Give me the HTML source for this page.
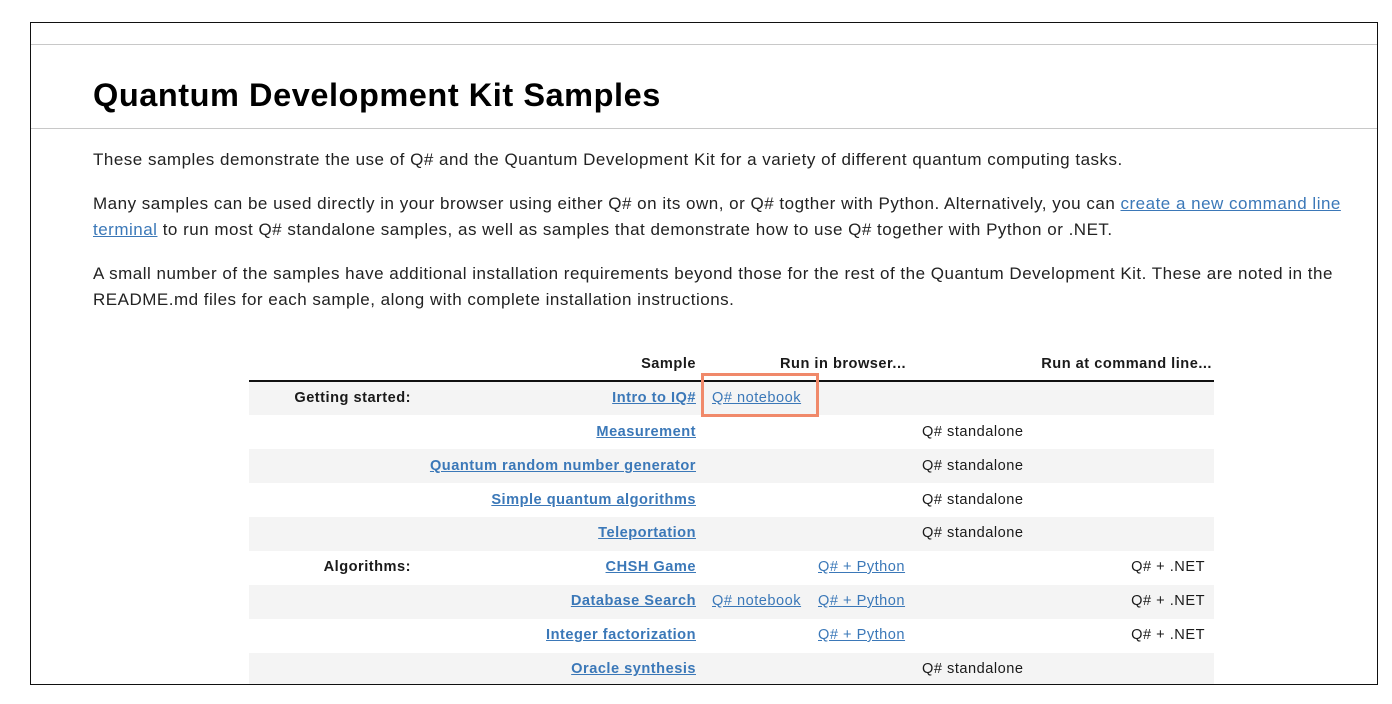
<!DOCTYPE html>
<html><head><style>
*{margin:0;padding:0;box-sizing:border-box}
body{width:1392px;height:704px;background:#fff;font-family:"Liberation Sans",Arial,sans-serif;color:#1a1a1a;position:relative;overflow:hidden}
.frame{position:absolute;left:30px;top:22px;width:1348px;height:663px;border:1.5px solid #111;overflow:hidden}
.hl{position:absolute;left:0;right:0;height:1px;background:#c8c8c8}
h1{position:absolute;left:62px;top:54px;font-size:32.5px;letter-spacing:0.55px;font-weight:bold;color:#000;white-space:nowrap}
p{position:absolute;left:62px;width:1262px;font-size:17px;letter-spacing:0.5px;line-height:26px;color:#222}
a{color:#3b78b8;text-decoration:underline}
.t{position:absolute;font-size:14.6px;letter-spacing:0.5px;white-space:nowrap}
.r{text-align:right}
.b{font-weight:bold}
.row{position:absolute;left:218px;width:965px;height:34px}
.g{background:#f4f4f4}
</style></head><body>
<div class="frame">
<div class="hl" style="top:21px"></div>
<h1>Quantum Development Kit Samples</h1>
<div class="hl" style="top:105px"></div>
<p style="top:124px">These samples demonstrate the use of Q# and the Quantum Development Kit for a variety of different quantum computing tasks.</p>
<p style="top:168px">Many samples can be used directly in your browser using either Q# on its own, or Q# togther with Python. Alternatively, you can <a>create a new command line terminal</a> to run most Q# standalone samples, as well as samples that demonstrate how to use Q# together with Python or .NET.</p>
<p style="top:238px">A small number of the samples have additional installation requirements beyond those for the rest of the Quantum Development Kit. These are noted in the README.md files for each sample, along with complete installation instructions.</p>

<div class="row g" style="top:358px"></div>
<div class="row g" style="top:426px"></div>
<div class="row g" style="top:494px"></div>
<div class="row g" style="top:562px"></div>
<div class="row g" style="top:630px"></div>
<div style="position:absolute;left:218px;width:965px;top:357px;height:1.5px;background:#111"></div>

<div class="t b r" style="right:681px;top:333px">Sample</div>
<div class="t b" style="left:749px;top:333px">Run in browser...</div>
<div class="t b r" style="right:165px;top:333px">Run at command line...</div>

<div class="t b r" style="right:966px;top:367px">Getting started:</div>
<div class="t b r" style="right:966px;top:536px">Algorithms:</div>

<div class="t b r" style="right:681px;top:367px"><a>Intro to IQ#</a></div>
<div class="t b r" style="right:681px;top:401px"><a>Measurement</a></div>
<div class="t b r" style="right:681px;top:435px"><a>Quantum random number generator</a></div>
<div class="t b r" style="right:681px;top:469px"><a>Simple quantum algorithms</a></div>
<div class="t b r" style="right:681px;top:502px"><a>Teleportation</a></div>
<div class="t b r" style="right:681px;top:536px"><a>CHSH Game</a></div>
<div class="t b r" style="right:681px;top:570px"><a>Database Search</a></div>
<div class="t b r" style="right:681px;top:604px"><a>Integer factorization</a></div>
<div class="t b r" style="right:681px;top:638px"><a>Oracle synthesis</a></div>

<div class="t" style="left:681px;top:367px"><a>Q# notebook</a></div>
<div style="position:absolute;left:670px;top:350px;width:118px;height:44px;border:3px solid #f0896a"></div>
<div class="t" style="left:681px;top:570px"><a>Q# notebook</a></div>
<div class="t" style="left:787px;top:536px"><a>Q# + Python</a></div>
<div class="t" style="left:787px;top:570px"><a>Q# + Python</a></div>
<div class="t" style="left:787px;top:604px"><a>Q# + Python</a></div>

<div class="t" style="left:891px;top:401px">Q# standalone</div>
<div class="t" style="left:891px;top:435px">Q# standalone</div>
<div class="t" style="left:891px;top:469px">Q# standalone</div>
<div class="t" style="left:891px;top:502px">Q# standalone</div>
<div class="t" style="left:891px;top:638px">Q# standalone</div>

<div class="t r" style="right:172px;top:536px">Q# + .NET</div>
<div class="t r" style="right:172px;top:570px">Q# + .NET</div>
<div class="t r" style="right:172px;top:604px">Q# + .NET</div>
</div>
</body></html>
